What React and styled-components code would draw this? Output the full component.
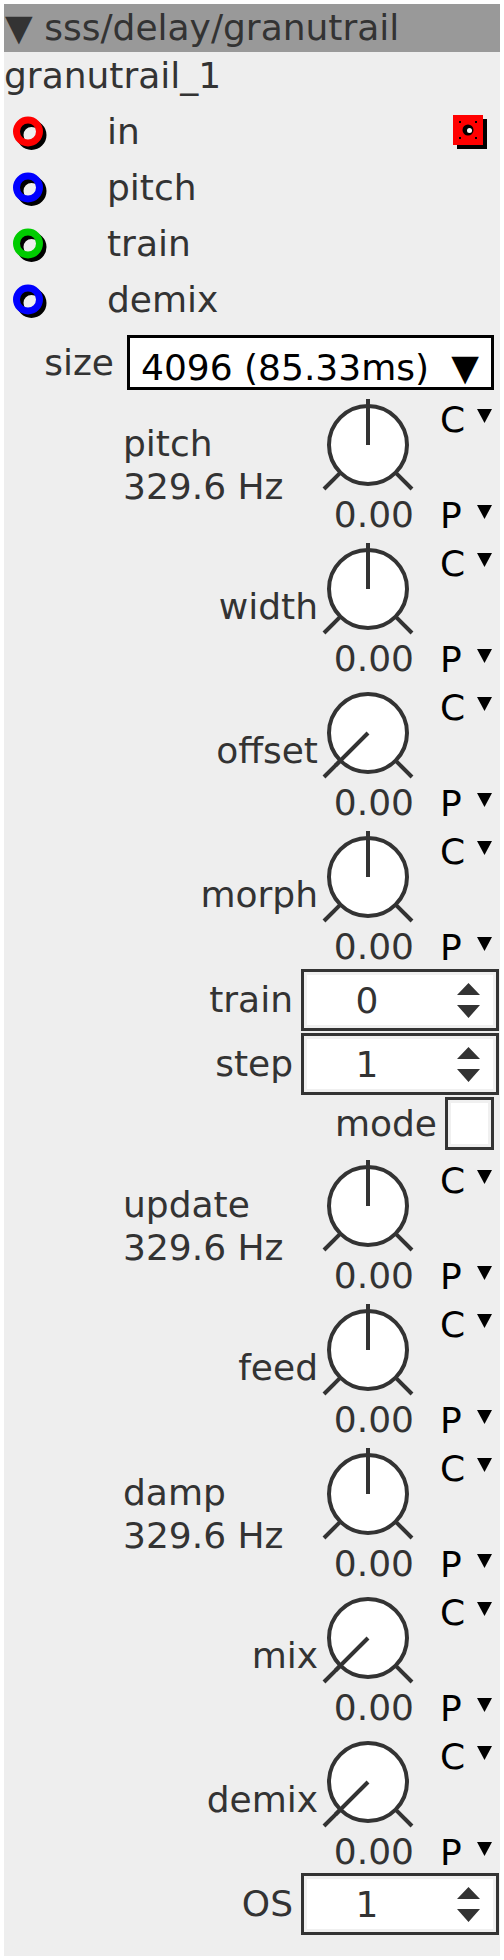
import React from 'react';
import styled, { createGlobalStyle } from 'styled-components';

const GlobalStyle = createGlobalStyle`
  body {
    margin: 0;
    background: #fff;
  }
`;

const Panel = styled.div`
  margin: 4px;
  width: 496px;
  background: #eee;
  color: #333;
  font-family: "DejaVu Sans", "Liberation Sans", sans-serif;
  font-size: 36px;
  padding-bottom: 21px;
`;

const Header = styled.div`
  height: 48px;
  line-height: 48px;
  background: #999;
  padding-left: 1px;
  white-space: nowrap;
`;

const Title = styled.div`
  line-height: 48px;
  margin-bottom: 4px;
`;

const PortRow = styled.div`
  display: grid;
  grid-template-columns: 103px 1fr auto;
  align-items: center;
  height: 56px;
`;

const PortIcon = styled.svg`
  display: block;
  margin-left: 9px;
`;

const PortLabel = styled.span`
  line-height: 56px;
`;

const OutSquare = styled.svg`
  display: block;
  margin-right: 13px;
`;

const SizeRow = styled.div`
  display: flex;
  align-items: center;
  margin: 7px 0 5px;
`;

const SizeLabel = styled.span`
  width: 110px;
  text-align: right;
  margin-right: 13px;
`;

const Select = styled.div`
  box-sizing: border-box;
  width: 367px;
  height: 55px;
  border: 3px solid #000;
  background: #fff;
  color: #000;
  padding: 10px 12px 0 11px;
  line-height: 39px;
  display: flex;
  justify-content: space-between;
`;

const KnobRow = styled.div`
  display: grid;
  grid-template-columns: 318px 92px 1fr;
  height: 144px;
`;

const KnobLabel = styled.div`
  ${(p) =>
    p.$top
      ? `padding: 27px 0 0 119px; line-height: 43px;`
      : `padding: 46px 4px 0 0; line-height: 44px; text-align: right;`}
`;

const KnobCol = styled.div`
  display: flex;
  flex-direction: column;
`;

const KnobSvg = styled.svg`
  display: block;
  margin-top: 4px;
`;

const Value = styled.div`
  line-height: 48px;
  text-align: right;
`;

const SideCol = styled.div`
  display: flex;
  flex-direction: column;
  justify-content: space-between;
  padding-left: 26px;
  color: #000;
`;

const Mod = styled.div`
  display: flex;
  align-items: center;
  height: 48px;
`;

const ModLetter = styled.span`
  width: 37px;
`;

const Tri = styled.svg`
  display: block;
  margin-bottom: 7px;
`;

const SpinRow = styled.div`
  display: grid;
  grid-template-columns: 289px 198px;
  column-gap: 8px;
  height: 62px;
  margin-top: ${(p) => p.$gap}px;
`;

const SpinLabel = styled.span`
  line-height: 62px;
  text-align: right;
`;

const SpinBox = styled.div`
  box-sizing: border-box;
  height: 62px;
  border: 3px solid #333;
  box-shadow: inset 0 0 0 3px #f0f0f0;
  background: #fff;
  display: flex;
  align-items: center;
`;

const SpinValue = styled.span`
  width: 126px;
  text-align: center;
`;

const Arrows = styled.svg`
  display: block;
  margin-left: 27px;
`;

const ModeRow = styled.div`
  display: flex;
  justify-content: flex-end;
  align-items: center;
  column-gap: 8px;
  margin-top: 2px;
  margin-bottom: 6px;
  padding-right: 6px;
`;

const Check = styled.div`
  box-sizing: border-box;
  width: 49px;
  height: 53px;
  border: 3px solid #333;
  box-shadow: inset 0 0 0 3px #f0f0f0;
  background: #fff;
`;

const Port = ({ color }) => (
  <PortIcon width="36" height="36" viewBox="0 0 36 36">
    <circle cx="18.5" cy="21" r="11.5" fill="none" stroke="#000" strokeWidth="7" />
    <circle cx="15" cy="17.5" r="11.5" fill="none" stroke={color} strokeWidth="7" />
  </PortIcon>
);

const Triangle = () => (
  <Tri width="15" height="14" viewBox="0 0 15 14">
    <path d="M0 0H15L7.5 14Z" fill="#000" />
  </Tri>
);

// pointer at 12 o'clock for centred params, at the lower-left stop for min
const Knob = ({ min }) => {
  const a = min ? (225 * Math.PI) / 180 : 0;
  const x2 = 46 + Math.sin(a) * 46;
  const y2 = 46 - Math.cos(a) * 46;
  return (
    <KnobSvg width="92" height="92" viewBox="0 0 92 92">
      <g stroke="#333" strokeWidth="4" fill="none">
        <line x1="18.4" y1="73.6" x2="2" y2="90" />
        <line x1="73.6" y1="73.6" x2="90" y2="90" />
        <circle cx="46" cy="46" r="39" fill="#fff" />
        <line x1="46" y1="46" x2={x2} y2={y2} />
      </g>
    </KnobSvg>
  );
};

const KnobControl = ({ label, hz, min }) => (
  <KnobRow>
    <KnobLabel $top={!!hz}>
      {label}
      {hz && <div>{hz}</div>}
    </KnobLabel>
    <KnobCol>
      <Knob min={min} />
      <Value>0.00</Value>
    </KnobCol>
    <SideCol>
      <Mod>
        <ModLetter>C</ModLetter>
        <Triangle />
      </Mod>
      <Mod>
        <ModLetter>P</ModLetter>
        <Triangle />
      </Mod>
    </SideCol>
  </KnobRow>
);

const Spin = ({ label, value, gap = 2 }) => (
  <SpinRow $gap={gap}>
    <SpinLabel>{label}</SpinLabel>
    <SpinBox>
      <SpinValue>{value}</SpinValue>
      <Arrows width="23" height="35" viewBox="0 0 23 35">
        <path d="M0 12L11.5 0L23 12Z M0 22H23L11.5 35Z" fill="#333" />
      </Arrows>
    </SpinBox>
  </SpinRow>
);

const ports = [
  { name: 'in', color: '#f00' },
  { name: 'pitch', color: '#00f' },
  { name: 'train', color: '#0c0' },
  { name: 'demix', color: '#00f' },
];

export default function App() {
  return (
    <>
      <GlobalStyle />
      <Panel>
        <Header>▼ sss/delay/granutrail</Header>
        <Title>granutrail_1</Title>
        {ports.map((p, i) => (
          <PortRow key={p.name}>
            <Port color={p.color} />
            <PortLabel>{p.name}</PortLabel>
            {i === 0 ? (
              <OutSquare width="34" height="34" viewBox="0 0 34 34">
                <rect x="4" y="4" width="30" height="30" fill="#000" />
                <rect x="0" y="0" width="30" height="30" fill="#f00" />
                <circle cx="15" cy="15" r="5.5" fill="#000" />
                <circle cx="16.5" cy="15.5" r="2.5" fill="#fff" />
                <g fill="#000">
                  <rect x="6" y="6" width="2" height="2" />
                  <rect x="22" y="6" width="2" height="2" />
                  <rect x="6" y="22" width="2" height="2" />
                  <rect x="22" y="22" width="2" height="2" />
                </g>
              </OutSquare>
            ) : (
              <span />
            )}
          </PortRow>
        ))}
        <SizeRow>
          <SizeLabel>size</SizeLabel>
          <Select>
            <span>4096 (85.33ms)</span>
            <span>▼</span>
          </Select>
        </SizeRow>
        <KnobControl label="pitch" hz="329.6 Hz" />
        <KnobControl label="width" />
        <KnobControl label="offset" min />
        <KnobControl label="morph" />
        <Spin label="train" value="0" gap={-2} />
        <Spin label="step" value="1" />
        <ModeRow>
          <span>mode</span>
          <Check />
        </ModeRow>
        <KnobControl label="update" hz="329.6 Hz" />
        <KnobControl label="feed" />
        <KnobControl label="damp" hz="329.6 Hz" />
        <KnobControl label="mix" min />
        <KnobControl label="demix" min />
        <Spin label="OS" value="1" gap={-3} />
      </Panel>
    </>
  );
}
